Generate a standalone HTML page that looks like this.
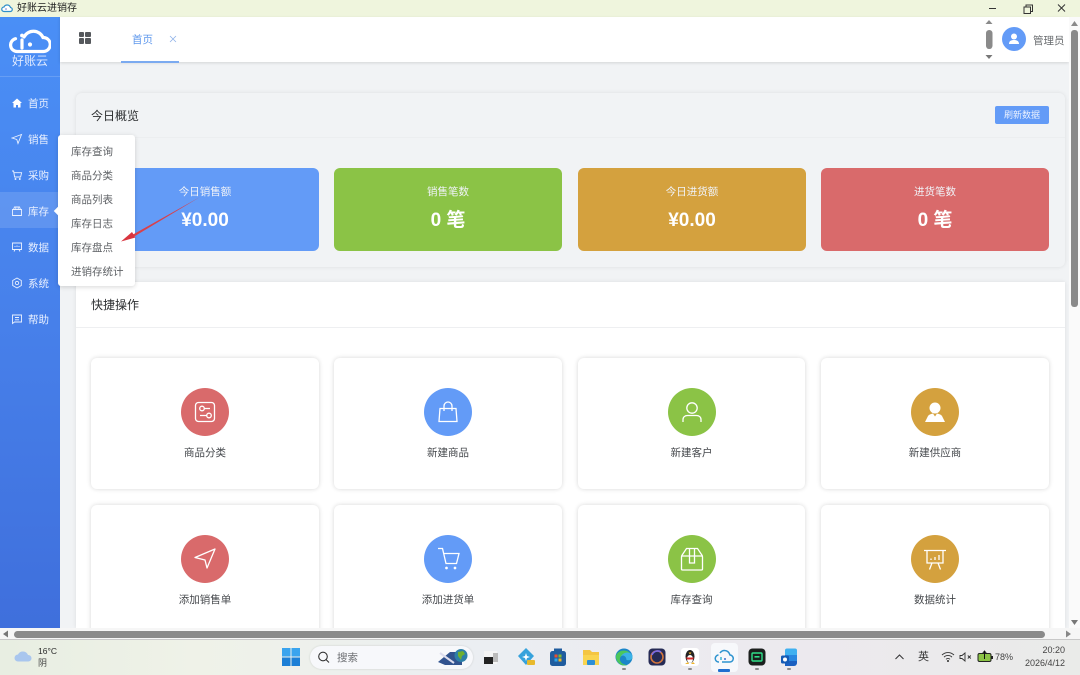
<!DOCTYPE html>
<html lang="zh"><head><meta charset="utf-8"><title>好账云进销存</title>
<style>
*{box-sizing:border-box;margin:0;padding:0}
html,body{width:1080px;height:675px;overflow:hidden;background:#f1f3f5;font-family:"Liberation Sans","Noto Sans CJK SC",sans-serif}
.a{position:absolute}
#page{position:relative;width:1080px;height:675px;overflow:hidden}
.t{position:absolute;white-space:nowrap}
.c{text-align:center}
.nav{position:absolute;left:28px;font-size:10.5px;color:#e9f0ff;line-height:14px;top:0}
.ni{position:absolute;left:11px;width:12px;height:12px}
.mi{position:absolute;left:71px;font-size:10.5px;color:#5f6266;line-height:14px;white-space:nowrap}
.stat{position:absolute;top:168px;height:83px;border-radius:6px;color:#fff;text-align:center}
.stat .l{position:absolute;left:0;right:0;top:17px;font-size:10.5px;line-height:14px;color:#f0f3f8}
.stat .v{position:absolute;left:0;right:0;top:40px;font-size:19px;font-weight:bold;line-height:26px}
.card{position:absolute;width:228px;height:131px;background:#fff;border-radius:6px;box-shadow:0 0 5px rgba(0,0,0,.16)}
.circ{position:absolute;left:90px;top:30px;width:48px;height:48px;border-radius:50%}
.circ svg{position:absolute;left:0;top:0}
.cap{position:absolute;left:0;right:0;top:87px;text-align:center;font-size:10.5px;line-height:14px;color:#45484c}
.tb{position:absolute;top:647px;width:20px;height:20px}
.dot{position:absolute;top:668px;width:4px;height:2px;background:#8a8a8a;border-radius:1px}
</style></head><body><div id="page">

<!-- title bar -->
<div class="a" style="left:0;top:0;width:1080px;height:17px;background:#eff5dd"></div>
<svg class="a" style="left:1px;top:2px" width="12" height="12" viewBox="0 0 24 24"><path d="M6 19a4.500 4.500 0 0 1 0-9 7 7 0 0 1 13 1 4 4 0 0 1-1 8z" fill="#fff" stroke="#2f8fc9" stroke-width="2.400"/><circle cx="10" cy="14" r="1.500" fill="#5a6fd0"/></svg>
<div class="t" style="left:17px;top:2px;font-size:10px;line-height:14px;color:#222">好账云进销存</div>
<svg class="a" style="left:980px;top:2px" width="100" height="14" viewBox="0 0 100 14" fill="none" stroke="#333" stroke-width="1"><path d="M9 6.500h7"/><path d="M44 5h6.500v6.500H44z"/><path d="M46 5V3h6.500v6.500H50.500"/><path d="M78 2.500l7 7M85 2.500l-7 7"/></svg>

<!-- sidebar -->
<div class="a" style="left:0;top:17px;width:60px;height:611px;background:linear-gradient(180deg,#4a8ff6 0%,#4780ea 50%,#3f6fdc 100%)"></div>
<svg class="a" style="left:9px;top:27px" width="42" height="27" viewBox="0 0 42 27" fill="none">
<path d="M15 10A10.500 10.500 0 0 1 34 10.500A7 7 0 0 1 34.500 24.500H8A6.500 6.500 0 0 1 6.500 11.700" stroke="#fff" stroke-width="3.200" stroke-linecap="round"/>
<path d="M13 13v8" stroke="#fff" stroke-width="3.200" stroke-linecap="round"/><circle cx="13" cy="8.500" r="1.900" fill="#fff"/><circle cx="21" cy="17.500" r="2.100" fill="#fff"/></svg>
<div class="t c" style="left:0;width:60px;top:54px;font-size:12px;line-height:15px;color:#dfe9ff">好账云</div>
<div class="a" style="left:0;top:76px;width:60px;height:1px;background:rgba(255,255,255,.16)"></div>
<div class="a" style="left:0;top:192px;width:60px;height:36px;background:rgba(255,255,255,.13)"></div>

<svg class="ni" style="top:97px" viewBox="0 0 12 12"><path d="M6 1.500L1 6h1.500v4.500h2.500V8h2v2.500h2.500V6H11z" fill="#fff"/></svg>
<svg class="ni" style="top:133px" viewBox="0 0 12 12" fill="none" stroke="#eaf1ff" stroke-width=".9"><path d="M1 5l9.500-3.500-3.500 9-1.200-4z"/></svg>
<svg class="ni" style="top:169px" viewBox="0 0 12 12" fill="none" stroke="#eaf1ff" stroke-width=".9"><path d="M1 2h1.600l1 6h6l1-4.300H3"/><circle cx="4.500" cy="10" r=".5"/><circle cx="8.800" cy="10" r=".5"/></svg>
<svg class="ni" style="top:205px" viewBox="0 0 12 12" fill="none" stroke="#eaf1ff" stroke-width=".9"><path d="M1.500 4.500h9v6h-9zM2.500 4.500L3.500 2h5l1 2.500M4.800 2v3M7.200 2v3"/></svg>
<svg class="ni" style="top:241px" viewBox="0 0 12 12" fill="none" stroke="#eaf1ff" stroke-width=".9"><path d="M1.500 2h9v6.500h-9zM4 8.500L3 10.500M8 8.500l1 2M4 6V5M6 6V4.500M8 6V5"/></svg>
<svg class="ni" style="top:277px" viewBox="0 0 12 12" fill="none" stroke="#eaf1ff" stroke-width=".9"><path d="M6 1l4.300 2.500v5L6 11 1.700 8.500v-5z"/><circle cx="6" cy="6" r="1.700"/></svg>
<svg class="ni" style="top:313px" viewBox="0 0 12 12" fill="none" stroke="#eaf1ff" stroke-width=".9"><path d="M1.500 2h9v7H3.500L1.500 10.500zM4 4.500h4M4 6.800h4"/></svg>

<div class="nav" style="top:97px">首页</div>
<div class="nav" style="top:133px">销售</div>
<div class="nav" style="top:169px">采购</div>
<div class="nav" style="top:205px">库存</div>
<div class="nav" style="top:241px">数据</div>
<div class="nav" style="top:277px">系统</div>
<div class="nav" style="top:313px">帮助</div>

<!-- top bar -->
<div class="a" style="left:60px;top:17px;width:1009px;height:45px;background:#fff;box-shadow:0 1px 3px rgba(0,0,0,.13)"></div>
<div class="a" style="left:79px;top:32px;width:5px;height:5px;background:#55585c;border-radius:1px"></div>
<div class="a" style="left:85px;top:32px;width:6px;height:5px;background:#55585c;border-radius:1px"></div>
<div class="a" style="left:79px;top:38px;width:5px;height:6px;background:#55585c;border-radius:1px"></div>
<div class="a" style="left:85px;top:38px;width:6px;height:6px;background:#55585c;border-radius:1px"></div>
<div class="t" style="left:132px;top:33px;font-size:10.5px;line-height:14px;color:#5d97ec">首页</div>
<svg class="a" style="left:169px;top:35px" width="8" height="8" viewBox="0 0 8 8" stroke="#8fb2e8" stroke-width=".8"><path d="M1 1l6 6M7 1L1 7"/></svg>
<div class="a" style="left:121px;top:61px;width:58px;height:1.500px;background:#7baaf0"></div>

<svg class="a" style="left:984px;top:18px" width="10" height="44" viewBox="0 0 10 44"><path d="M5 2l3.500 4h-7z" fill="#8a8a8a"/><rect x="2" y="12" width="6.500" height="19" rx="3.200" fill="#8a8a8a"/><path d="M5 41l3.500-4h-7z" fill="#777"/></svg>
<div class="a" style="left:1002px;top:27px;width:24px;height:24px;border-radius:50%;background:#639bf7"></div>
<svg class="a" style="left:1002px;top:27px" width="24" height="24" viewBox="0 0 24 24" fill="#fff"><circle cx="12" cy="9.500" r="3"/><path d="M7 17c0-3 2-4 5-4s5 1 5 4z"/></svg>
<div class="t" style="left:1033px;top:34px;font-size:10.500px;line-height:14px;color:#6a6d70">管理员</div>

<!-- panel 1 -->
<div class="a" style="left:76px;top:93px;width:989px;height:174px;background:#f1f3f5;border-radius:6px;box-shadow:0 0 4px rgba(0,0,0,.09)"></div>
<div class="a" style="left:76px;top:137px;width:989px;height:1px;background:#eceef0"></div>
<div class="t" style="left:91px;top:108px;font-size:12px;line-height:17px;color:#2c2e30">今日概览</div>
<div class="a c" style="left:995px;top:106px;width:54px;height:18px;background:#639bf7;border-radius:2px;font-size:9px;line-height:18px;color:#eaf1ff">刷新数据</div>

<div class="stat" style="left:91px;width:228px;background:#639bf7"><div class="l">今日销售额</div><div class="v">¥0.00</div></div>
<div class="stat" style="left:334px;width:228px;background:#8bc346"><div class="l">销售笔数</div><div class="v">0 笔</div></div>
<div class="stat" style="left:578px;width:228px;background:#d4a13e"><div class="l">今日进货额</div><div class="v">¥0.00</div></div>
<div class="stat" style="left:821px;width:228px;background:#d96a6b"><div class="l">进货笔数</div><div class="v">0 笔</div></div>

<!-- panel 2 -->
<div class="a" style="left:76px;top:282px;width:989px;height:346px;background:#fff;box-shadow:0 0 4px rgba(0,0,0,.09)"></div>
<div class="a" style="left:76px;top:327px;width:989px;height:1px;background:#eeeff1"></div>
<div class="t" style="left:91px;top:297px;font-size:12px;line-height:17px;color:#2c2e30">快捷操作</div>

<div class="a" style="left:76px;top:328px;width:989px;height:300px;overflow:hidden">
<div class="card" style="left:15px;top:30px"><div class="circ" style="background:#d96a6b"><svg width="48" height="48" viewBox="0 0 48 48" fill="none" stroke="#fff" stroke-width="1.300"><rect x="14.500" y="14.500" width="19" height="19" rx="3"/><circle cx="21" cy="20.500" r="2.300"/><path d="M23.500 20.500h5.500M19 27.500h6.500"/><circle cx="28" cy="27.500" r="2.300"/></svg></div><div class="cap" style="top:88px">商品分类</div></div>
<div class="card" style="left:258px;top:30px"><div class="circ" style="background:#639bf7"><svg width="48" height="48" viewBox="0 0 48 48" fill="none" stroke="#fff" stroke-width="1.300"><path d="M16 20.500h16l1 13h-18z"/><path d="M20 23v-5a4 4 0 0 1 8 0v5"/></svg></div><div class="cap" style="top:88px">新建商品</div></div>
<div class="card" style="left:502px;top:30px;width:227px"><div class="circ" style="background:#8bc346;left:90px"><svg width="48" height="48" viewBox="0 0 48 48" fill="none" stroke="#fff" stroke-width="1.300"><circle cx="24" cy="20" r="5.200"/><path d="M15 34v-2.500c0-2.500 2-4 4.500-4h9c2.500 0 4.500 1.500 4.500 4V34"/></svg></div><div class="cap" style="top:88px">新建客户</div></div>
<div class="card" style="left:745px;top:30px"><div class="circ" style="background:#d4a13e"><svg width="48" height="48" viewBox="0 0 48 48" fill="#fff"><circle cx="24" cy="20" r="5.500"/><path d="M14 34l3-6c1-1.500 3-2 5-2.500l2 3 2-3c2 .5 4 1 5 2.500l3 6z"/></svg></div><div class="cap" style="top:88px">新建供应商</div></div>

<div class="card" style="left:15px;top:177px"><div class="circ" style="background:#d96a6b"><svg width="48" height="48" viewBox="0 0 48 48" fill="none" stroke="#fff" stroke-width="1.300" stroke-linejoin="round"><path d="M14 22.500l20-8.500-8 19-2-8z"/></svg></div><div class="cap" style="top:88px">添加销售单</div></div>
<div class="card" style="left:258px;top:177px"><div class="circ" style="background:#639bf7"><svg width="48" height="48" viewBox="0 0 48 48" fill="none" stroke="#fff" stroke-width="1.300"><path d="M14 13.500h4.500l3.500 15h10.500l2.500-10H19.500"/><circle cx="22.500" cy="33" r=".7"/><circle cx="31" cy="33" r=".7"/></svg></div><div class="cap" style="top:88px">添加进货单</div></div>
<div class="card" style="left:502px;top:177px;width:227px"><div class="circ" style="background:#8bc346"><svg width="48" height="48" viewBox="0 0 48 48" fill="none" stroke="#fff" stroke-width="1.300"><rect x="13.500" y="21" width="21" height="14" rx="1"/><path d="M13.500 21l5-7.500h11l5 7.500M21.500 13.500V28h5V13.500"/></svg></div><div class="cap" style="top:88px">库存查询</div></div>
<div class="card" style="left:745px;top:177px"><div class="circ" style="background:#d4a13e"><svg width="48" height="48" viewBox="0 0 48 48" fill="none" stroke="#fff" stroke-width="1.300"><path d="M13 15.500h22M16 15.500V28h16V15.500M21 28l-2.500 6.500M27 28l2.500 6.500"/><path d="M20 25v-1.500M24 25v-3M28 25v-5"/></svg></div><div class="cap" style="top:88px">数据统计</div></div>
</div>

<!-- popup menu -->
<div class="a" style="left:58px;top:135px;width:77px;height:151px;background:#fff;border-radius:3px;box-shadow:0 1px 5px rgba(0,0,0,.16)"></div>
<div class="a" style="left:55px;top:207.500px;width:6px;height:6px;background:#fff;transform:rotate(45deg)"></div>
<div class="mi" style="top:145px">库存查询</div>
<div class="mi" style="top:169px">商品分类</div>
<div class="mi" style="top:193px">商品列表</div>
<div class="mi" style="top:217px">库存日志</div>
<div class="mi" style="top:241px">库存盘点</div>
<div class="mi" style="top:265px">进销存统计</div>

<!-- red arrow -->
<svg class="a" style="left:115px;top:190px" width="95" height="60" viewBox="0 0 95 60"><path d="M85 7L18 44.500l1.200 2z" fill="#d9404a"/><path d="M6 51.500l11-9.500 3.500 5.500z" fill="#d9353f"/></svg>

<!-- right scrollbar -->
<div class="a" style="left:1069px;top:17px;width:11px;height:611px;background:#fafafa"></div>
<svg class="a" style="left:1070px;top:20px" width="9" height="8" viewBox="0 0 9 8"><path d="M4.500 1l3.500 5H1z" fill="#8a8a8a"/></svg>
<div class="a" style="left:1071px;top:30px;width:6.500px;height:277px;border-radius:3px;background:#8a8a8a"></div>
<svg class="a" style="left:1070px;top:618px" width="9" height="8" viewBox="0 0 9 8"><path d="M4.500 7L8 2H1z" fill="#777"/></svg>

<!-- bottom scrollbar -->
<div class="a" style="left:0;top:628px;width:1080px;height:12px;background:#f6f6f6;border-bottom:1px solid #c8c8c8"></div>
<svg class="a" style="left:2px;top:630px" width="8" height="8" viewBox="0 0 8 8"><path d="M1 4l5-3.500v7z" fill="#777"/></svg>
<div class="a" style="left:14px;top:630.500px;width:1031px;height:7px;border-radius:3.500px;background:#8a8a8a"></div>
<svg class="a" style="left:1064px;top:630px" width="8" height="8" viewBox="0 0 8 8"><path d="M7 4L2 .5v7z" fill="#888"/></svg>

<!-- taskbar -->
<div class="a" style="left:0;top:640px;width:1080px;height:35px;background:linear-gradient(90deg,#e8eee2 0%,#eff2e8 18%,#ebeef2 45%,#ece9ee 75%,#eaebe9 100%)"></div>
<svg class="a" style="left:14px;top:648px" width="19" height="15" viewBox="0 0 19 15"><path d="M4 13.500a3.500 3.500 0 0 1 0-7 5.500 5.500 0 0 1 10 .5 3.200 3.200 0 0 1 .5 6.500z" fill="#a9c6ee"/></svg>
<div class="t" style="left:38px;top:646px;font-size:8.500px;line-height:11px;color:#2b2b2b">16°C</div>
<div class="t" style="left:38px;top:657px;font-size:9px;line-height:13px;color:#444">阴</div>

<svg class="a" style="left:282px;top:648px" width="18" height="18" viewBox="0 0 18 18"><rect x="0" y="0" width="8.500" height="8.500" fill="#3aa4ee"/><rect x="9.500" y="0" width="8.500" height="8.500" fill="#3aa4ee"/><rect x="0" y="9.500" width="8.500" height="8.500" fill="#1c7fd6"/><rect x="9.500" y="9.500" width="8.500" height="8.500" fill="#1c7fd6"/></svg>
<div class="a" style="left:310px;top:646px;width:163px;height:23px;border-radius:12px;background:#f7f8fb;box-shadow:0 0 2px rgba(0,0,0,.14)"></div>
<svg class="a" style="left:317px;top:650px" width="14" height="14" viewBox="0 0 14 14" fill="none" stroke="#333" stroke-width="1.100"><circle cx="6" cy="6.500" r="4.300"/><path d="M9 9.500l3 3"/></svg>
<div class="t" style="left:337px;top:651px;font-size:10.500px;line-height:14px;color:#6c6e72">搜索</div>
<svg class="a" style="left:435px;top:648px" width="34" height="18" viewBox="0 0 34 18"><path d="M3 14L15 4h12v13H10z" fill="#31538f"/><path d="M5 5l14 10" stroke="#dde" stroke-width="2"/><circle cx="26" cy="7.500" r="6.500" fill="#2e7fa8"/><path d="M23 4l5-1 2 3-3 2-1 4-3-4z" fill="#6fb02e"/></svg>

<svg class="tb" style="left:481px" viewBox="0 0 20 20"><rect x="3" y="4" width="13" height="13" fill="#f5f5f5"/><rect x="3" y="10" width="9" height="7" fill="#222"/><rect x="12" y="6" width="5" height="9" fill="#bbb"/></svg>
<svg class="tb" style="left:516px" viewBox="0 0 20 20"><path d="M10 1l8 8-8 9-8-9z" fill="#36a2dc"/><path d="M10 6l1 3 3 1-3 1-1 3-1-3-3-1 3-1z" fill="#fff"/><rect x="11" y="13" width="8" height="5" rx="1" fill="#e8b92c"/></svg>
<svg class="tb" style="left:548px" viewBox="0 0 20 20"><rect x="2" y="4" width="16" height="15" rx="2.500" fill="#1f5c9e"/><rect x="6" y="1.500" width="8" height="3" fill="#1f5c9e"/><rect x="6.500" y="7.500" width="3" height="3" fill="#e8502f"/><rect x="10.500" y="7.500" width="3" height="3" fill="#7fba2e"/><rect x="6.500" y="11.500" width="3" height="3" fill="#2ca3e8"/><rect x="10.500" y="11.500" width="3" height="3" fill="#f2b620"/></svg>
<svg class="tb" style="left:581px" viewBox="0 0 20 20"><path d="M2 3h7l2 2h7v13H2z" fill="#f4c542"/><rect x="2" y="8" width="16" height="10" fill="#f9d44f"/><rect x="6" y="13" width="8" height="5" rx="1" fill="#2c8fd6"/></svg>
<svg class="tb" style="left:614px" viewBox="0 0 20 20"><circle cx="10" cy="10" r="8.500" fill="#1b86c9"/><path d="M2 9C3 3 15 0 18.500 10c0 3-3 3.500-6 3 0-4-4-6-6-3s1 8 7 8c-5 2-12-2-11.500-9z" fill="#4cc65c"/><path d="M6.500 10c2-3 6-1 6 3 3 .5 6 0 6-3 0-1-.5-2-1-3-4-3-9-1-11 3z" fill="#3bb2e8"/></svg>
<svg class="tb" style="left:647px" viewBox="0 0 20 20"><rect x="1.500" y="1.500" width="17" height="17" rx="4" fill="#252a55"/><circle cx="10" cy="10" r="6" fill="none" stroke="#d2763d" stroke-width="1.600"/><path d="M5 8a6 6 0 0 1 9-3" stroke="#7a6be8" stroke-width="1.600" fill="none"/></svg>
<svg class="tb" style="left:680px" viewBox="0 0 20 20"><rect x="1" y="1" width="18" height="18" rx="3" fill="#fff"/><ellipse cx="10" cy="9.500" rx="4.500" ry="6.500" fill="#222"/><ellipse cx="10" cy="12" rx="3" ry="4" fill="#fff"/><path d="M6 10.500h8l-1 2H7z" fill="#d42b2b"/><path d="M8.500 5.500h3l-1.500 2z" fill="#efb52c"/><path d="M5 17h4l-1-2zM11 17h4l-2-2z" fill="#efb52c"/></svg>
<div class="a" style="left:711px;top:643px;width:27px;height:29px;background:#f7f8fb;border-radius:4px"></div>
<svg class="tb" style="left:714px" viewBox="0 0 20 20" fill="none"><path d="M5 15a3.500 3.500 0 0 1-.5-7M8 15h7.500a3.500 3.500 0 0 0 .5-7C15 5 13 3.500 10.500 3.500c-2 0-3.500 1-4.500 2.500" stroke="#2e93cf" stroke-width="1.500"/><path d="M7 10v3" stroke="#2eb0cf" stroke-width="1.400"/><circle cx="11" cy="12" r="1" fill="#3c6fd0"/></svg>
<div class="a" style="left:718px;top:669px;width:12px;height:2.500px;border-radius:1px;background:#1f6fd0"></div>
<svg class="tb" style="left:747px" viewBox="0 0 20 20"><rect x="1.500" y="1.500" width="17" height="17" rx="4" fill="#1b1f1d"/><rect x="5" y="6" width="10" height="8" rx="1" fill="none" stroke="#2fe08a" stroke-width="1.400"/><rect x="7.500" y="9" width="5" height="1.600" fill="#2fe08a"/></svg>
<svg class="tb" style="left:779px" viewBox="0 0 20 20"><rect x="6" y="1.500" width="12" height="8" rx="2" fill="#3fb0f0"/><rect x="6" y="8" width="12" height="6" fill="#2887e0"/><path d="M6 14h12v2a3 3 0 0 1-3 3H6z" fill="#1a5fc0"/><rect x="2" y="8.500" width="8" height="8" rx="1.500" fill="#155bb5"/><circle cx="6" cy="12.500" r="2" fill="#fff"/></svg>
<div class="dot" style="left:622px"></div>
<div class="dot" style="left:688px"></div>
<div class="dot" style="left:755px"></div>
<div class="dot" style="left:787px"></div>

<svg class="a" style="left:894px;top:652px" width="11" height="10" viewBox="0 0 11 10" fill="none" stroke="#333" stroke-width="1"><path d="M1.500 7l4-4 4 4"/></svg>
<div class="t" style="left:918px;top:650px;font-size:11px;line-height:15px;color:#333">英</div>
<svg class="a" style="left:941px;top:650px" width="14" height="13" viewBox="0 0 14 13" fill="none" stroke="#333" stroke-width=".9"><path d="M1 5a8.500 8.500 0 0 1 12 0M3 7.200a5.500 5.500 0 0 1 8 0M5 9.300a2.800 2.800 0 0 1 4 0"/><circle cx="7" cy="11" r=".6" fill="#333"/></svg>
<svg class="a" style="left:959px;top:651px" width="14" height="12" viewBox="0 0 14 12" fill="none" stroke="#333" stroke-width=".9"><path d="M1 4.500h2L6 2v8L3 7.500H1z"/><path d="M8.800 4.500l3 3M11.800 4.500l-3 3"/></svg>
<svg class="a" style="left:977px;top:650px" width="17" height="13" viewBox="0 0 17 13"><rect x="1" y="3.500" width="13" height="8" rx="1.500" fill="#8bc346" stroke="#222" stroke-width="1"/><rect x="14.500" y="6" width="1.500" height="3" fill="#222"/><path d="M7.500 1v8M5.500 3.500l2-2.500 2 2.500" stroke="#111" stroke-width="1" fill="none"/></svg>
<div class="t" style="left:995px;top:652px;font-size:9px;line-height:11px;color:#444">78%</div>
<div class="t" style="left:1000px;width:65px;top:644px;font-size:9px;line-height:12px;color:#444;text-align:right">20:20</div>
<div class="t" style="left:1000px;width:65px;top:657px;font-size:9px;line-height:12px;color:#444;text-align:right">2026/4/12</div>

</div></body></html>
